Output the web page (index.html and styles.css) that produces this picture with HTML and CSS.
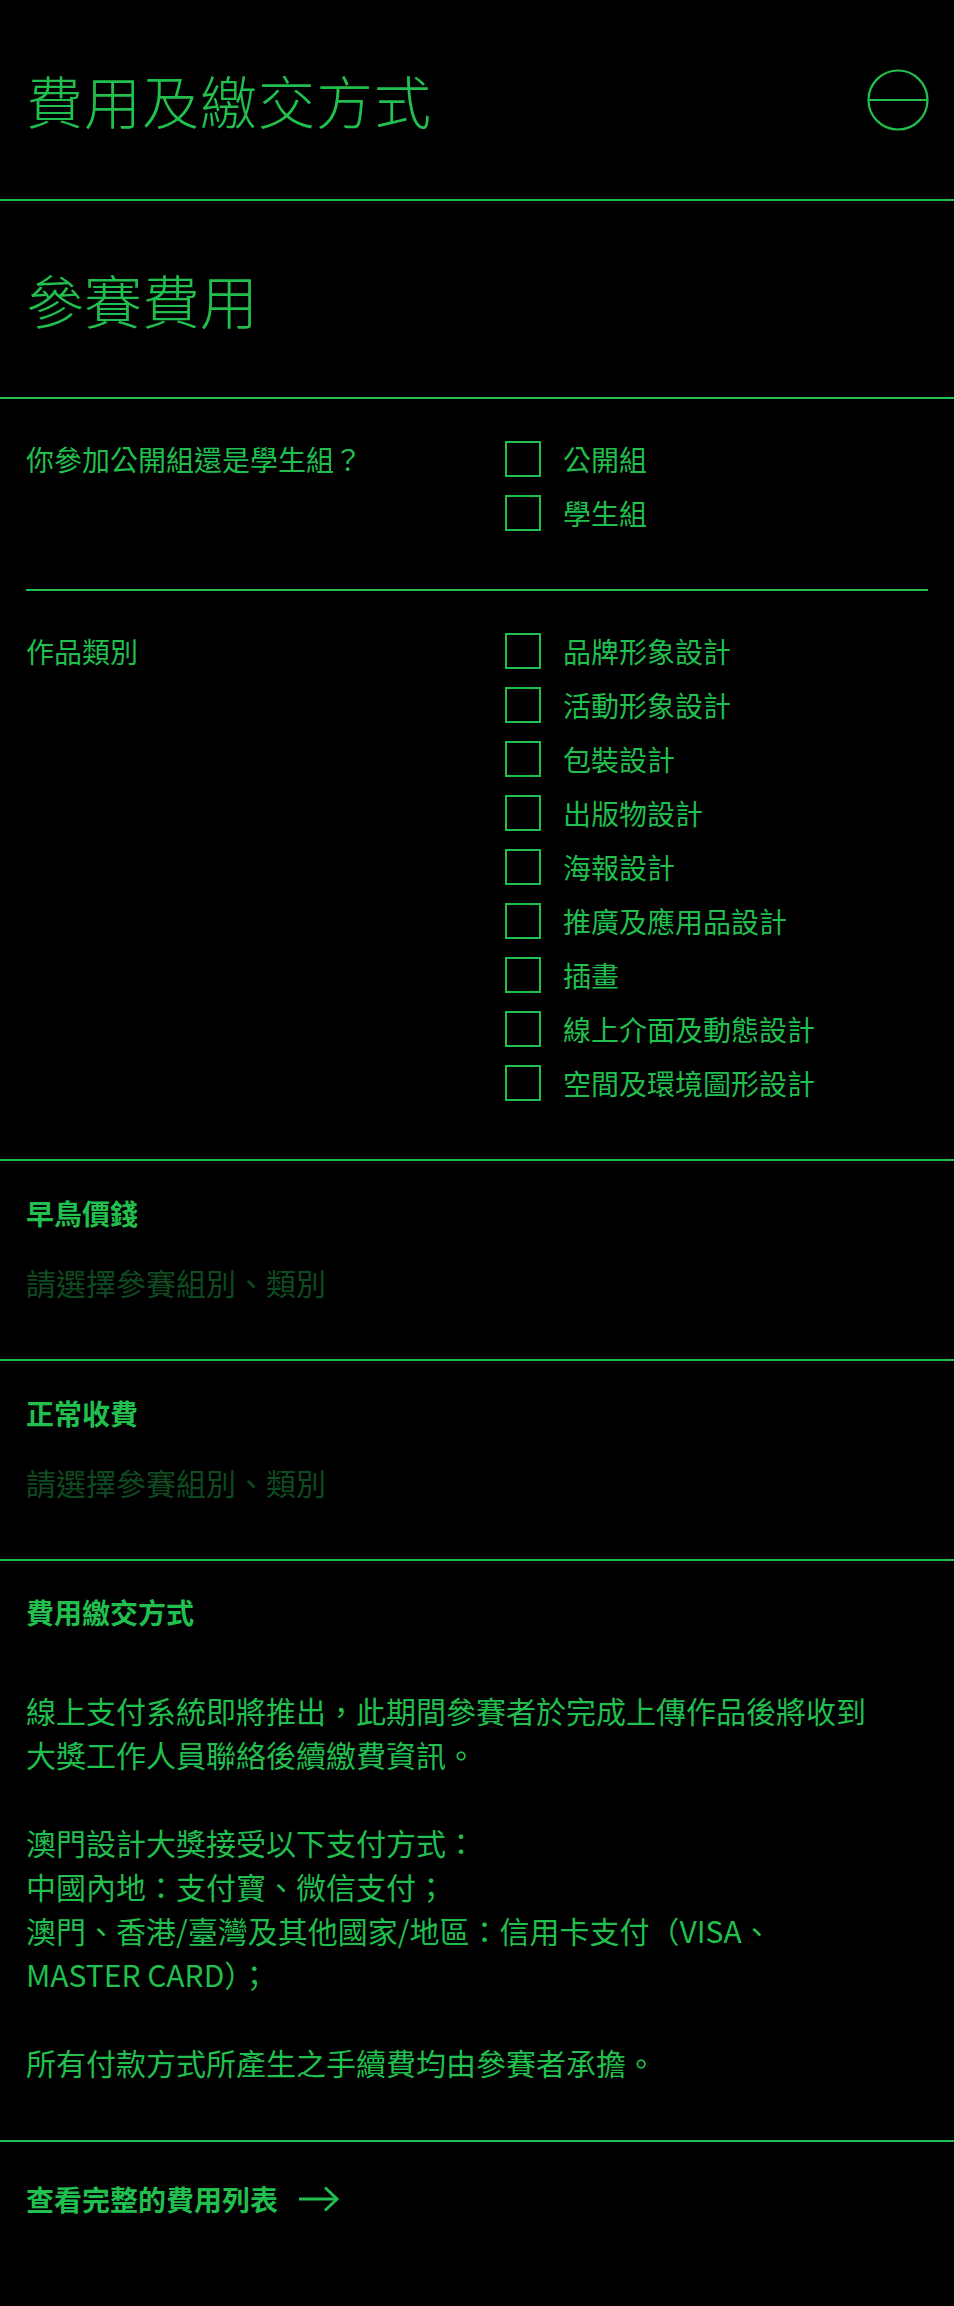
FILE: index.html
```html
<!DOCTYPE html>
<html lang="zh-Hant">
<head>
<meta charset="utf-8">
<title>費用及繳交方式</title>
<link rel="stylesheet" href="styles.css">
</head>
<body>
<main class="page">
  <header class="header">
    <h1 class="header-title">費用及繳交方式</h1>
    <button class="toggle" aria-label="收起">
      <svg width="62" height="62" viewBox="0 0 62 62" fill="none" stroke="currentColor" stroke-width="2.2">
        <circle cx="31" cy="31" r="29.5"/>
        <line x1="1.5" y1="31" x2="60.5" y2="31"/>
      </svg>
    </button>
  </header>

  <section class="section-head">
    <h2 class="section-title">參賽費用</h2>
  </section>

  <section class="form">
    <div class="form-row">
      <div class="form-label">你參加公開組還是學生組？</div>
      <ul class="options">
        <li class="option"><span class="box"></span><span class="option-text">公開組</span></li>
        <li class="option"><span class="box"></span><span class="option-text">學生組</span></li>
      </ul>
    </div>
    <div class="form-row">
      <div class="form-label">作品類別</div>
      <ul class="options">
        <li class="option"><span class="box"></span><span class="option-text">品牌形象設計</span></li>
        <li class="option"><span class="box"></span><span class="option-text">活動形象設計</span></li>
        <li class="option"><span class="box"></span><span class="option-text">包裝設計</span></li>
        <li class="option"><span class="box"></span><span class="option-text">出版物設計</span></li>
        <li class="option"><span class="box"></span><span class="option-text">海報設計</span></li>
        <li class="option"><span class="box"></span><span class="option-text">推廣及應用品設計</span></li>
        <li class="option"><span class="box"></span><span class="option-text">插畫</span></li>
        <li class="option"><span class="box"></span><span class="option-text">線上介面及動態設計</span></li>
        <li class="option"><span class="box"></span><span class="option-text">空間及環境圖形設計</span></li>
      </ul>
    </div>
  </section>

  <section class="price">
    <h3 class="block-title">早鳥價錢</h3>
    <p class="placeholder">請選擇參賽組別、類別</p>
  </section>

  <section class="price">
    <h3 class="block-title">正常收費</h3>
    <p class="placeholder">請選擇參賽組別、類別</p>
  </section>

  <section class="payment">
    <h3 class="block-title">費用繳交方式</h3>
    <p class="payment-text">線上支付系統即將推出，此期間參賽者於完成上傳作品後將收到<br>大獎工作人員聯絡後續繳費資訊。</p>
    <p class="payment-text">澳門設計大獎接受以下支付方式：<br>中國內地：支付寶、微信支付；<br>澳門、香港/臺灣及其他國家/地區：信用卡支付（VISA、<br>MASTER CARD）；</p>
    <p class="payment-text">所有付款方式所產生之手續費均由參賽者承擔。</p>
  </section>

  <section class="link-row">
    <a class="more-link" href="#">查看完整的費用列表
      <svg class="arrow" width="42" height="26" viewBox="0 0 42 26" fill="none" stroke="currentColor" stroke-width="3">
        <line x1="1" y1="13" x2="38" y2="13"/>
        <polyline points="27,1.5 39,13 27,24.5"/>
      </svg>
    </a>
  </section>
</main>
</body>
</html>
```

FILE: styles.css
```css
* {
  box-sizing: border-box;
}

html, body {
  margin: 0;
  padding: 0;
  background: #000;
}

body {
  color: #21bf4e;
  font-family: "Noto Sans CJK TC", "Noto Sans", sans-serif;
  font-size: 28px;
}

h1, h2, h3, p, ul {
  margin: 0;
  padding: 0;
}

ul {
  list-style: none;
}

.page {
  width: 954px;
}

.header {
  display: flex;
  align-items: center;
  justify-content: space-between;
  height: 201px;
  padding: 0 25px 0 26px;
  border-bottom: 2px solid #21bf4e;
}

.header-title {
  font-size: 57px;
  font-weight: 300;
  line-height: 1;
  letter-spacing: 1px;
}

.toggle {
  display: flex;
  padding: 0;
  border: 0;
  background: none;
  color: #21bf4e;
}

.section-head {
  display: flex;
  align-items: center;
  height: 198px;
  padding: 0 26px;
  border-bottom: 2px solid #21bf4e;
}

.section-title {
  font-size: 58px;
  font-weight: 300;
  line-height: 1;
}

.form {
  padding: 0 26px;
  border-bottom: 2px solid #21bf4e;
}

.form-row {
  display: grid;
  grid-template-columns: 479px 1fr;
  padding: 42px 0 40px;
}

.form-row + .form-row {
  border-top: 2px solid #21bf4e;
}

.form-label {
  font-size: 28px;
  line-height: 36px;
}

.options {
  display: flex;
  flex-direction: column;
  gap: 18px;
  padding-bottom: 18px;
}

.option {
  display: flex;
  align-items: center;
  gap: 22px;
  height: 36px;
}

.box {
  width: 36px;
  height: 36px;
  border: 2.2px solid #21bf4e;
  flex: none;
}

.option-text {
  font-size: 28px;
  line-height: 36px;
}

.price {
  display: flex;
  flex-direction: column;
  gap: 40px;
  height: 200px;
  padding: 38px 26px 0;
  border-bottom: 2px solid #21bf4e;
}

.block-title {
  font-size: 28px;
  font-weight: 700;
  line-height: 28px;
}

.placeholder {
  font-size: 30px;
  line-height: 30px;
  color: #0f4a20;
}

.payment {
  padding: 37px 26px 56px;
  border-bottom: 2px solid #21bf4e;
}

.payment .block-title {
  margin-bottom: 62px;
}

.payment-text {
  font-size: 30px;
  line-height: 44px;
}

.payment-text + .payment-text {
  margin-top: 44px;
}

.link-row {
  padding: 37px 26px 0;
  height: 166px;
}

.more-link {
  display: inline-flex;
  align-items: center;
  gap: 20px;
  color: #21bf4e;
  font-size: 28px;
  font-weight: 700;
  line-height: 28px;
  text-decoration: none;
}

.arrow {
  display: block;
}
```
